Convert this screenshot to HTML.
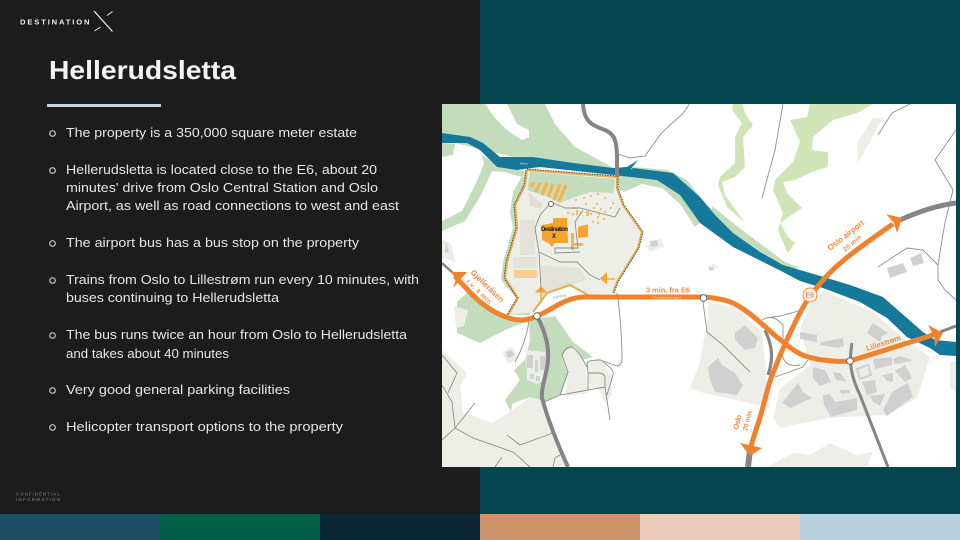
<!DOCTYPE html>
<html><head><meta charset="utf-8"><style>
html,body{margin:0;padding:0;background:#1c1c1c}
svg{display:block}
text{font-family:"Liberation Sans",sans-serif}
.t{font-size:12.6px;fill:#e6e6e6}
</style></head><body>
<svg width="960" height="540" viewBox="0 0 960 540" xmlns="http://www.w3.org/2000/svg">
<rect width="480" height="540" fill="#1c1c1c"/>
<rect x="480" width="480" height="540" fill="#04464f"/>
<rect y="514" width="160" height="26" fill="#1f4f66"/>
<rect x="160" y="514" width="160" height="26" fill="#055f47"/>
<rect x="320" y="514" width="160" height="26" fill="#0c2837"/>
<rect x="480" y="514" width="160" height="26" fill="#cc936b"/>
<rect x="640" y="514" width="160" height="26" fill="#eccdbc"/>
<rect x="800" y="514" width="160" height="26" fill="#b9d0de"/>

<text x="20" y="24.5" font-size="7.6" font-weight="bold" fill="#eee" textLength="69.500" lengthAdjust="spacing">DESTINATION</text>
<path d="M94 11L112.500 31.500" stroke="#eee" stroke-width="1.300" fill="none"/>
<path d="M112.500 11.500L107 15.500M100.500 27L94.500 31" stroke="#eee" stroke-width="1" fill="none"/>
<text x="49" y="79" font-size="26" font-weight="bold" fill="#f4f4f4" textLength="187" lengthAdjust="spacingAndGlyphs">Hellerudsletta</text>
<rect x="47" y="104" width="114" height="3" fill="#c5d6e0"/>

<g fill="none" stroke="#b5cad6" stroke-width="1.200">
<circle cx="52.500" cy="133.500" r="2.800"/><circle cx="52.500" cy="170.500" r="2.800"/><circle cx="52.500" cy="243.500" r="2.800"/><circle cx="52.500" cy="280.500" r="2.800"/><circle cx="52.500" cy="335.500" r="2.800"/><circle cx="52.500" cy="390.500" r="2.800"/><circle cx="52.500" cy="427.500" r="2.800"/>
</g>
<text class="t" x="66" y="137" textLength="291" lengthAdjust="spacingAndGlyphs">The property is a 350,000 square meter estate</text>
<text class="t" x="66" y="174" textLength="311" lengthAdjust="spacingAndGlyphs">Hellerudsletta is located close to the E6, about 20</text>
<text class="t" x="66" y="192" textLength="312" lengthAdjust="spacingAndGlyphs">minutes' drive from Oslo Central Station and Oslo</text>
<text class="t" x="66" y="210" textLength="333" lengthAdjust="spacingAndGlyphs">Airport, as well as road connections to west and east</text>
<text class="t" x="66" y="247" textLength="293" lengthAdjust="spacingAndGlyphs">The airport bus has a bus stop on the property</text>
<text class="t" x="66" y="284" textLength="353" lengthAdjust="spacingAndGlyphs">Trains from Oslo to Lillestrøm run every 10 minutes, with</text>
<text class="t" x="66" y="302" textLength="213" lengthAdjust="spacingAndGlyphs">buses continuing to Hellerudsletta</text>
<text class="t" x="66" y="339" textLength="341" lengthAdjust="spacingAndGlyphs">The bus runs twice an hour from Oslo to Hellerudsletta</text>
<text class="t" x="66" y="358" textLength="163" lengthAdjust="spacingAndGlyphs">and takes about 40 minutes</text>
<text class="t" x="66" y="394" textLength="224" lengthAdjust="spacingAndGlyphs">Very good general parking facilities</text>
<text class="t" x="66" y="431" textLength="277" lengthAdjust="spacingAndGlyphs">Helicopter transport options to the property</text>
<g font-size="4.500" font-weight="bold" fill="#666">
<text x="16" y="495.500" textLength="44" lengthAdjust="spacing">CONFIDENTIAL</text>
<text x="16" y="501" textLength="44" lengthAdjust="spacing">INFORMATION</text>
</g>

<!-- MAP -->
<svg x="442" y="104" width="514" height="363" viewBox="442 104 514 363" overflow="hidden">
<rect x="442" y="104" width="514" height="363" fill="#fff"/>
<g>
<!-- greens -->
<g fill="#c3dcbc">
<path d="M442 104H545L555 124L575 147L612 167L617 172L560 168L442 140Z"/>
<path d="M442 143L455 144L453 155L442 157Z"/>
<path d="M482 155L497 165L527 172L521 177L505 172L492 171L480 197L465 221L442 231V221L462 211L477 181L484 164Z"/>
<path d="M617 174L633 167L667 170L687 180L700 197L712 210L735 232L752 247L735 238L718 226L700 222L695 227L680 204L662 188L642 184L624 192L619 190Z"/>
<path d="M712 206L742 230L785 262L800 268L783 270L745 246L712 222Z"/>
<path d="M527 172L521 178L513 192L510 212L513 228L503 262L501 280L516 298L507 315L520 315L530 315L530 280L530 180Z"/>
<path d="M457 302L457 333L480 343L505 330L520 324L535 320L530 316L508 320L483 307L468 292Z"/>
<path d="M529 320L555 316L573 342L593 357L582 360L566 350L562 358L568 375L561 394L546 402L530 397L512 404L511 412L505 400L520 380L514 370L525 360L530 340Z"/>
</g>
<path d="M485 104H507L517 124L529 130L529 137L522 140L508 131L495 118Z" fill="#fff"/>
<g fill="#cfe5b8">
<path d="M733 104L742 104L746 115L753 125L743 137L745 167L735 177L722 182L725 195L745 223L727 207L718 185L720 177L735 163L735 137L742 123L732 110Z"/>
<path d="M810 104H873L857 113L833 120L813 137L812 150L828 152L828 167L812 172L795 180L783 182L787 193L802 208L780 223L788 237L795 243L788 253L785 247L778 230L783 213L773 190L775 180L793 162L800 142L790 120L807 117Z"/>
</g>
<!-- town areas -->
<g fill="#eeeee8">
<path d="M442 350L467 373L460 387L463 412L492 423L510 412L530 397L543 402L568 467H442Z"/>
<path d="M708 302L735 308L762 332L770 408L700 392L690 388L700 362L708 315Z"/>
<path d="M823 290L873 312L903 338L930 357L917 398L887 415L827 418L780 428L773 418L780 388L810 365L800 328L810 305Z"/>
<path d="M767 467L793 453L810 455L830 443L857 455L873 452L867 467Z"/>
<path d="M873 118H883L858 163L857 143Z"/>
<path d="M950 362H956V392L950 388Z"/>
<path d="M566 350L575 347L585 362L588 393L565 397L568 375L562 358Z"/>
<path d="M587 362L600 358L612 375L612 395L605 403L598 388L588 388Z"/>
<path d="M526 350L545 352L547 378L538 384L527 380Z"/>
<path d="M502 352L512 346L518 358L508 364Z"/>
<path d="M454 306L468 310L464 326L456 328Z"/>
<path d="M442 240L450 242L456 262L442 258Z"/>
<path d="M646 246L660 238L664 246L650 252Z"/>
<path d="M707 266L714 264L718 268L710 272Z"/>
</g>
<!-- river -->
<path d="M442 133L470 137L483 143L500 157L533 157L573 163L613 168L627 167L638 160L630 170L633 168L673 173L700 197L715 215L733 233L760 252L783 265L817 275L850 285L883 297L900 312L923 332L935 340L956 342V356L940 355L930 348L907 337L887 318L860 302L823 288L800 281L783 272L733 247L700 223L680 195L657 180L613 175L540 167L517 170L497 167L480 150L467 143L442 143Z" fill="#16799a"/>
<!-- estate -->
<path d="M527 170L617 177L617 188L623 205L642 232L638 248L617 282L613 293L588 295L570 285L547 293L533 312L508 315L518 298L505 278L507 262L517 228L515 205L525 185Z" fill="#eeeee8"/>
<path d="M530 172L615 179L613 193L590 192L572 198L560 203L548 197L533 192L527 190Z" fill="#c3dcbc"/>
<path d="M528 192L543 204L540 209L530 206Z" fill="#dfdfd8"/>
<path d="M520 220H535V255H520ZM513 257H537V268H513Z" fill="#e3e3da"/>
<rect x="514" y="270" width="23" height="8" fill="#f5ce8e"/>
<path d="M541 265L580 268L587 280L570 285L547 293L541 300Z" fill="#e3e3da"/>
<path d="M533 312L547 293L570 285L588 295" fill="none" stroke="#e3ae56" stroke-width="2"/>
<path d="M536 313C550 300 565 292 571 290C578 293 582 296 586 296C565 300 550 305 541 313Z" fill="#fff"/>
<path d="M527 170L617 177L617 188L623 205L642 232L638 248L617 282L613 293M527 170L525 185L515 205L517 228L507 262L505 278L518 298L508 315" fill="none" stroke="#e3ae56" stroke-width="2.200"/>
<path d="M527 169L617 176M618 176L618 188L624 205L643 232L639 248L618 282L614 293M526 170L524 185L514 205L516 228L506 262L504 278L517 298L507 315" fill="none" stroke="#333" stroke-width=".9" stroke-dasharray="1.300 1.300"/>
<!-- estate buildings -->
<path d="M542 225L553 223L553 218L567 218L568 243L555 243L552 247L548 243L542 240Z" fill="#f5a42e"/>
<path d="M578 227L588 224L588 237L578 238Z" fill="#f5a42e"/>
<path d="M571 233H574V243H583V246H574V250H571Z" fill="#e7b564"/>
<g stroke="#f5b24a" stroke-width="3.300" fill="none">
<path d="M534 182L531 187M540 183L536 192M547 183L542 195M553 184L548 197M560 184L554 200M566 185L559 201"/>
</g>
<path d="M575 199h2v2h-2zM590 195h2v2h-2zM583 197h2v2h-2zM597 193h2v2h-2zM604 197h2v2h-2zM573 207h2v2h-2zM585 203h2v2h-2zM596 203h2v2h-2zM580 212h2v2h-2zM567 212h2v2h-2zM612 202h2v2h-2zM586 211h3v5h-3zM576 210h2v5h-2zM597 216h2v2h-2zM604 211h2v2h-2zM590 213h2v2h-2zM597 222h2v2h-2zM603 218h2v2h-2zM598 213h2v2h-2zM592 221h2v2h-2zM610 207h2v2h-2zM600 208h2v2h-2zM572 213h2v2h-2zM593 207h2v2h-2z" fill="#f3bd6a"/>
<g fill="none" stroke="#8e8e88" stroke-width=".9">
<path d="M549 205L540 215L535 228L539 252L541 288M539 252L560 262H577L590 275L600 280"/>
<path d="M553 203L565 208H580L615 217L620 208M583 210L575 222L578 248L555 248L555 253L580 252"/>
<path d="M617 293C620 310 622 340 622 360Q621 366 617 366L600 360Q588 360 587 363L588 373H600Q605 374 605 378L605 387L610 420M588 373V390M603 362Q615 370 613 375L607 395"/>
<path d="M544 402L560 395L605 387M560 395L568 372L562 355Q566 346 572 347Q578 350 587 367"/>
<path d="M529 320Q527 340 515 362"/>
<path d="M442 355L457 373L448 393M442 385L452 402L455 428L475 403M442 440L455 428L473 438L513 452L530 467"/>
<path d="M507 435L520 445L553 433M502 457L495 467M553 467L555 458L560 455"/>
<path d="M703 302L707 332L723 345L750 372"/>
<path d="M762 320Q773 313 783 325L783 338M766 318L780 316L795 312L806 308"/>
<path d="M775 377L803 367L808 360M782 352Q783 368 800 365"/>
<path d="M689 104C685 115 668 125 660 135L645 156L630 158L618 154"/>
<path d="M783 104L775 150L762 198"/>
<path d="M910 104L892 113L878 135"/>
<path d="M956 130L935 160L953 190L945 223L942 240L938 265L938 280L945 290L956 300"/>
<path d="M878 267L907 248L923 250L938 265"/>
</g>
<path d="M541 303V290" stroke="#f5a42e" stroke-width="1.300"/><path d="M535 292.500H547L541 286Z" fill="#f5a42e"/>
<path d="M615 279H605" stroke="#f5a42e" stroke-width="1.300"/><path d="M607 272V284.500L600 278.500Z" fill="#f5a42e"/>
<circle cx="551" cy="204" r="2.500" fill="#fff" stroke="#666" stroke-width="1"/>
<text x="541" y="231" font-size="6" font-weight="bold" fill="#222" textLength="27">Destination</text>
<text x="552" y="238" font-size="6" font-weight="bold" fill="#222">X</text>
<!-- buildings -->
<g fill="#d0d0d0">
<path d="M745 325L758 338L755 348L745 350L735 340L735 333Z"/>
<path d="M718 358L722 365L735 373L743 385L737 395L715 392L710 380L708 367Z"/>
<path d="M800 332L817 335V342L800 339ZM821 342L843 338L844 346L838 348L820 345Z"/>
<path d="M873 323L888 333L882 336L880 342L867 333Z"/>
<path d="M813 367L825 370L831 382L820 386L813 378ZM833 372L840 373L847 382L836 380Z"/>
<path d="M798 383L803 392L812 398L790 408L785 404L782 403L790 393Z"/>
<path d="M823 395L830 394L835 402L857 398V410L831 417L824 405Z"/>
<path d="M840 390H850V393L841 394Z"/>
<path d="M873 359L892 357V365L875 369ZM893 359L900 356L913 360L902 363L894 364Z"/>
<path d="M857 369L868 365L871 375L860 379Z" fill="none" stroke="#d0d0d0" stroke-width="2"/>
<path d="M882 375L893 373V382L887 381ZM895 371L905 365L912 378L905 382Z"/>
<path d="M862 382L875 380L877 392L867 396ZM870 396L885 394L880 406L873 402ZM887 403L892 392L908 383L913 397L895 410L887 416L883 410Z"/>
<path d="M887 268L903 263L907 272L890 278ZM910 258L921 253L924 263L913 266Z"/>
<path d="M527 355H533V368H527ZM535 360H538V372H535ZM540 356H546V370H540Z"/>
<path d="M530 374h4v5h-4zM536 376h4v5h-4z"/>
<path d="M506 352L511 350L515 355L508 358Z"/>
<path d="M446 242L449 252L445 253Z"/>
<path d="M650 241L657 240L658 246L651 247Z"/>
<path d="M709 267h4v3h-4z"/>
</g>
<!-- grey main roads -->
<g fill="none" stroke="#858585">
<path d="M583 104C584 120 590 125 605 130C618 136 617 145 617 176" stroke-width="4"/>
<path d="M538 318C545 332 549 345 548 360C547 375 541 385 542 398C548 420 558 445 568 467" stroke-width="4"/>
<path d="M442 263L453 273" stroke-width="2.500"/>
<path d="M765 330C772 345 774 358 768 375" stroke-width="3.200"/>
<path d="M748 467L750 450" stroke-width="6"/>
<path d="M900 220C920 211 940 205 956 203" stroke-width="5"/>
<path d="M852 343C849 360 850 375 860 395L888 467" stroke-width="3"/>
<path d="M940 332L956 326" stroke-width="3"/>
</g>
<!-- orange roads -->
<g fill="none" stroke="#f0812d">
<path d="M455 276C463 285 471 294 479 301C488 308 492 311 499 314C507 318 515 320 522 320C528 320 532 318 537 316C552 310 565 297 585 297L703 297C718 298 727 300 735 304C746 310 754 317 762 324C769 330 775 336 782 341C790 348 797 353 805 356C820 361 840 362 850 361C880 352 910 342 936 334" stroke-width="5"/>
<path d="M750 450C753 438 756 430 759 421C763 408 766 394 770 381C775 368 779 357 785 344C791 331 797 317 805 304C825 272 848 255 893 224" stroke-width="5"/>
</g>
<path d="M451 272L467 272L453 288L456 279Z" fill="#f0812d"/>
<path d="M886 214L902 218L897 233L894 223Z" fill="#f0812d"/>
<path d="M740 443L762 448L750 456Z" fill="#f0812d"/>
<path d="M928 325L943 333L935 347L934 336Z" fill="#f0812d"/>
<circle cx="537" cy="316" r="3.300" fill="#fff" stroke="#555" stroke-width=".8"/>
<circle cx="703.500" cy="298" r="3.300" fill="#fff" stroke="#555" stroke-width=".8"/>
<circle cx="850" cy="361" r="3.300" fill="#fff" stroke="#555" stroke-width=".8"/>
<circle cx="810" cy="295" r="7" fill="#fbeee2" stroke="#ef8c46" stroke-width="1"/>
<text x="805.500" y="297.500" font-size="7" fill="#b9703a">E6</text>
<text x="646" y="292.500" font-size="7.400" font-weight="bold" fill="#ef8c46" textLength="44">3 min. fra E6</text>
<text x="653" y="298.500" font-size="3" fill="#fff" textLength="28">Trondheimsvegen</text>
<g font-weight="bold" fill="#ef8c46">
<text transform="translate(830 251) rotate(-38)" font-size="8" textLength="44">Oslo airport</text>
<text transform="translate(845 252) rotate(-40)" font-size="6.500" textLength="22">20 min</text>
<text transform="translate(867 351) rotate(-18)" font-size="7.500" textLength="36">Lillestrøm</text>
<text transform="translate(738 430) rotate(-76)" font-size="7.500" textLength="15">Oslo</text>
<text transform="translate(747 431) rotate(-76)" font-size="6.500" textLength="20">20 min</text>
<text transform="translate(470 273) rotate(44)" font-size="8" textLength="43">Gjelleråsen</text>
<text transform="translate(466 282) rotate(44)" font-size="6.500" textLength="32">r.v. 4 min</text>
</g>
<text transform="translate(553 299) rotate(-12)" font-size="4" fill="#8fa6c0">Gjesing</text>
<text x="520" y="164.500" font-size="2.500" fill="#bfe0ee">Nitelva</text>
</g>
</svg>
</svg>
</body></html>
